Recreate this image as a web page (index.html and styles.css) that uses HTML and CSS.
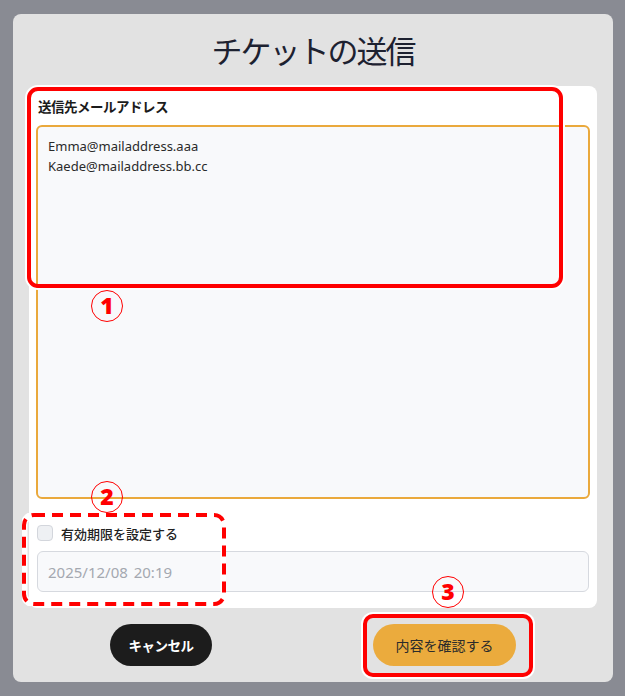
FILE: index.html
```html
<!DOCTYPE html>
<html lang="ja">
<head>
<meta charset="utf-8">
<title>チケットの送信</title>
<link rel="stylesheet" href="styles.css">
</head>
<body>
<div class="modal">
  <h1 class="title">チケットの送信</h1>
  <div class="card">
    <div class="field-label">送信先メールアドレス</div>
    <textarea class="emails" readonly>Emma@mailaddress.aaa
Kaede@mailaddress.bb.cc</textarea>
    <label class="check-row">
      <span class="checkbox"></span>
      <span class="check-text">有効期限を設定する</span>
    </label>
    <div class="date-input">2025/12/08 20:19</div>
  </div>
  <div class="footer">
    <button class="btn btn-cancel">キャンセル</button>
    <button class="btn btn-confirm">内容を確認する</button>
  </div>
</div>

<div class="anno anno-box1"></div>
<svg class="anno anno-box2" width="204" height="93" viewBox="0 0 204 93">
  <rect x="2" y="2" width="200" height="89" rx="10" ry="10" fill="none" stroke="#ffffff" stroke-width="7"/>
  <rect x="2" y="2" width="200" height="89" rx="10" ry="10" fill="none" stroke="#ff0000" stroke-width="4" stroke-dasharray="11 7"/>
</svg>
<div class="anno anno-box3"></div>
<div class="anno num num1">1</div>
<div class="anno num num2">2</div>
<div class="anno num num3">3</div>
</body>
</html>
```
FILE: styles.css
```css
html, body {
  margin: 0;
  padding: 0;
}
body {
  background: #898b93;
  width: 625px;
  height: 696px;
  overflow: hidden;
  font-family: "Noto Sans", "Noto Sans CJK JP", sans-serif;
  position: relative;
}
.modal {
  margin: 14px 0 0 13px;
  width: 600px;
  height: 668px;
  background: #e2e2e2;
  border-radius: 8px;
  display: flex;
  flex-direction: column;
}
.title {
  margin: 0;
  height: 72px;
  line-height: 72px;
  text-align: center;
  font-family: "Noto Sans CJK JP", sans-serif;
  font-weight: 400;
  font-size: 31px;
  letter-spacing: -2px;
  color: #1d2130;
}
.card {
  margin: 0 16px;
  height: 522px;
  box-sizing: border-box;
  padding: 7px 7px 16px 7px;
  background: #ffffff;
  border-radius: 8px;
  display: flex;
  flex-direction: column;
}
.field-label {
  height: 26px;
  line-height: 26px;
  padding-left: 2px;
  font-family: "Noto Sans CJK JP", sans-serif;
  font-weight: 700;
  font-size: 13.5px;
  letter-spacing: -0.5px;
  color: #1b1b1b;
}
.emails {
  margin: 6px 0 0 0;
  width: 554px;
  height: 374px;
  box-sizing: border-box;
  border: 2px solid #eaa93c;
  border-radius: 6px;
  background: #f8f9fb;
  padding: 9px 10px;
  font-family: "Noto Sans", "Noto Sans CJK JP", sans-serif;
  font-size: 13px;
  line-height: 20px;
  color: #2a2a2a;
  resize: none;
  outline: none;
  display: block;
}
.check-row {
  margin-top: 22px;
  height: 24px;
  display: flex;
  align-items: center;
  gap: 8px;
  padding-left: 1px;
}
.checkbox {
  width: 16px;
  height: 16px;
  box-sizing: border-box;
  border: 1px solid #d3d6dc;
  border-radius: 4px;
  background: #eef0f3;
}
.check-text {
  font-family: "Noto Sans CJK JP", sans-serif;
  font-weight: 500;
  font-size: 13px;
  color: #222222;
}
.date-input {
  margin: 6px 1px 0 1px;
  height: 41px;
  box-sizing: border-box;
  border: 1px solid #d6d9df;
  border-radius: 6px;
  background: #f8f9fb;
  padding-left: 10px;
  display: flex;
  align-items: center;
  font-family: "Noto Sans", sans-serif;
  font-size: 15px;
  word-spacing: 2px;
  color: #a4a8b0;
}
.footer {
  height: 74px;
  display: flex;
  align-items: center;
  justify-content: center;
  gap: 161px;
}
.btn {
  height: 42px;
  border: none;
  border-radius: 21px;
  font-family: "Noto Sans CJK JP", sans-serif;
  padding: 0;
  cursor: pointer;
}
.btn-cancel {
  width: 102px;
  background: #1c1c1c;
  color: #ffffff;
  font-weight: 700;
  font-size: 13.5px;
  letter-spacing: -0.5px;
}
.btn-confirm {
  width: 143px;
  background: #ebab3d;
  color: #2b2b2b;
  font-weight: 400;
  font-size: 14px;
}

/* annotation overlays */
.anno {
  position: absolute;
}
.anno-box1 {
  left: 27px;
  top: 87px;
  width: 536px;
  height: 201px;
  box-sizing: border-box;
  border: 4px solid #ff0000;
  border-radius: 11px;
  box-shadow: 0 0 0 2px #ffffff;
}
.anno-box2 {
  left: 22px;
  top: 513px;
}
.anno-box3 {
  left: 363px;
  top: 614px;
  width: 170px;
  height: 63px;
  box-sizing: border-box;
  border: 4px solid #ff0000;
  border-radius: 10px;
  box-shadow: 0 0 0 2px #ffffff;
}
.num {
  width: 32px;
  height: 32px;
  box-sizing: border-box;
  border: 1.5px solid #ff0000;
  border-radius: 50%;
  color: #ff0000;
  font-family: "Noto Sans", sans-serif;
  font-weight: 900;
  font-size: 23px;
  line-height: 29px;
  text-align: center;
}
.num1 {
  left: 91px;
  top: 290px;
}
.num2 {
  left: 91px;
  top: 481px;
}
.num3 {
  left: 432px;
  top: 576px;
}
```
